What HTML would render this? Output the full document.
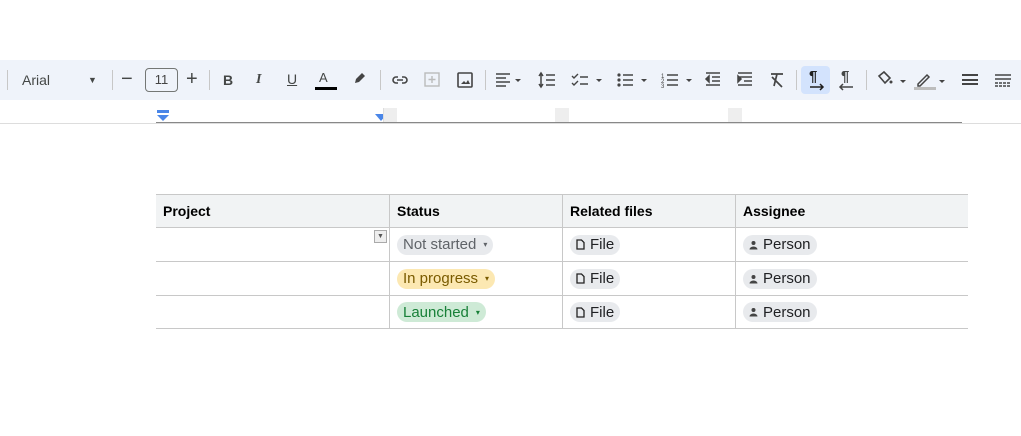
<!DOCTYPE html>
<html><head><style>
body{margin:0;width:1021px;height:436px;background:#fff;font-family:"Liberation Sans",Arial,sans-serif;position:relative;overflow:hidden}
.tb{position:absolute;left:0;top:60px;width:1021px;height:40px;background:#eff3fa}
.a{position:absolute;color:#444746;font-size:14px}
.sep{position:absolute;top:70px;width:1px;height:20px;background:#c7c7c7}
.ic{position:absolute;top:70px}
.tbl{position:absolute;left:156px;top:194px;border-collapse:collapse;font-size:14px}
.tbl td{border:1px solid #c8c8c8;padding:0 7px;height:33px;vertical-align:middle}
.tbl tr:first-child td{background:#f1f3f4;font-weight:bold;height:32px}
.tbl tr:last-child td{height:32px}
.tbl td:first-child{border-left:none}.tbl td:last-child{border-right:none}
.chip{display:inline-flex;align-items:center;height:20px;border-radius:10px;padding:0 6px;font-size:15px;color:#202124;background:#e8eaed;vertical-align:middle}
.ar{font-size:8px;margin-left:7px}
.chip svg{margin-right:5px}
</style></head><body>
<div class="tb"></div>
<div class="sep" style="left:7px"></div>
<div class="a" style="left:22px;top:72px;">Arial</div>
<div class="a" style="left:88px;top:75px;font-size:9px">▼</div>
<div class="sep" style="left:112px"></div>
<div class="a" style="left:121px;top:68px;font-size:20px">−</div>
<div style="position:absolute;left:145px;top:68px;width:31px;height:22px;border:1px solid #747775;border-radius:4px;font-size:13px;text-align:center;line-height:22px;color:#444">11</div>
<div class="a" style="left:186px;top:68px;font-size:20px">+</div>
<div class="sep" style="left:209px"></div>
<div class="a" style="left:223px;top:72px;font-weight:bold">B</div>
<div class="a" style="left:256px;top:72px;font-style:italic;font-weight:bold;font-family:'Liberation Serif'">I</div>
<div class="a" style="left:287px;top:71px;text-decoration:underline">U</div>
<div class="a" style="left:319px;top:70px;font-size:13px">A</div>
<div style="position:absolute;left:315px;top:87px;width:22px;height:3px;background:#000"></div>
<svg class="ic" style="left:351px;top:69px" width="18" height="18"><path d="M4 14l1-4 6-6 3 3-6 6z" fill="#444"/></svg>
<div class="sep" style="left:380px"></div>
<svg class="ic" style="left:390px" width="20" height="20"><path d="M8 7H6a3 3 0 000 6h2M12 7h2a3 3 0 010 6h-2M7 10h6" stroke="#444" stroke-width="1.6" fill="none"/></svg>
<svg class="ic" style="left:422px" width="20" height="20"><rect x="3" y="3" width="14" height="13" fill="none" stroke="#bbb" stroke-width="1.4"/><path d="M10 6v7M6.5 9.5h7" stroke="#bbb" stroke-width="1.4"/></svg>
<svg class="ic" style="left:455px" width="20" height="20"><rect x="3" y="3" width="14" height="14" rx="1" fill="none" stroke="#444" stroke-width="1.6"/><path d="M6 14l3-3 2 2 2-3 2 4z" fill="#444"/></svg>
<div class="sep" style="left:485px"></div>
<svg class="ic" style="left:494px" width="32" height="20"><path d="M2 4h14M2 8h10M2 12h14M2 16h10" stroke="#444" stroke-width="1.6"/><path d="M21 9l3 3 3-3z" fill="#444"/></svg>
<svg class="ic" style="left:537px" width="22" height="20"><path d="M4 4v12M2 6l2-3 2 3M2 14l2 3 2-3M9 5h9M9 10h9M9 15h9" stroke="#444" stroke-width="1.5" fill="none"/></svg>
<svg class="ic" style="left:570px" width="36" height="20"><path d="M2 6l2 2 4-4M2 13l2 2 4-4M10 7h8M10 14h8" stroke="#444" stroke-width="1.4" fill="none"/><path d="M26 9l3 3 3-3z" fill="#444"/></svg>
<svg class="ic" style="left:615px" width="36" height="20"><circle cx="4" cy="5" r="1.6" fill="#444"/><circle cx="4" cy="10" r="1.6" fill="#444"/><circle cx="4" cy="15" r="1.6" fill="#444"/><path d="M8 5h10M8 10h10M8 15h10" stroke="#444" stroke-width="1.6"/><path d="M26 9l3 3 3-3z" fill="#444"/></svg>
<svg class="ic" style="left:660px" width="36" height="20"><text x="1" y="8" font-size="6" fill="#444">1</text><text x="1" y="13" font-size="6" fill="#444">2</text><text x="1" y="18" font-size="6" fill="#444">3</text><path d="M7 5h11M7 10h11M7 15h11" stroke="#444" stroke-width="1.6"/><path d="M26 9l3 3 3-3z" fill="#444"/></svg>
<svg class="ic" style="left:703px" width="20" height="20"><path d="M3 3h14M9 7h8M9 11h8M3 15h14M6 6l-3 3 3 3z" stroke="#444" stroke-width="1.5" fill="#444"/></svg>
<svg class="ic" style="left:735px" width="20" height="20"><path d="M3 3h14M3 7h14M9 11h8M3 15h14M3 6l3 3-3 3z" stroke="#444" stroke-width="1.5" fill="#444"/></svg>
<svg class="ic" style="left:767px" width="20" height="20"><path d="M4 4h12M10 4l-3 12M5 7l10 10" stroke="#444" stroke-width="1.7" fill="none"/></svg>
<div class="sep" style="left:796px"></div>
<div style="position:absolute;left:801px;top:66px;width:29px;height:28px;background:#d3e3fd;border-radius:4px"></div>
<div class="a" style="left:809px;top:68px;font-weight:bold;font-size:15px;color:#1f1f1f">¶</div>
<svg class="ic" style="left:804px;top:82px" width="22" height="10"><path d="M6 5h13M16 2l3 3-3 3" stroke="#1f1f1f" stroke-width="1.5" fill="none"/></svg>
<div class="a" style="left:841px;top:68px;font-weight:bold;font-size:15px">¶</div>
<svg class="ic" style="left:836px;top:82px" width="22" height="10"><path d="M4 5h13M7 2l-3 3 3 3" stroke="#444" stroke-width="1.5" fill="none"/></svg>
<div class="sep" style="left:866px"></div>
<svg class="ic" style="left:875px" width="34" height="20"><path d="M4 6l5-4 6 6-5 5z" fill="none" stroke="#444" stroke-width="1.6"/><circle cx="16" cy="12" r="1.5" fill="#444"/><path d="M25 10l3 3 3-3z" fill="#444"/></svg>
<svg class="ic" style="left:913px" width="34" height="22"><path d="M5 14l9-9 2 2-9 9H5z" fill="none" stroke="#444" stroke-width="1.5"/><rect x="1" y="17" width="22" height="3" fill="#bdbdbd"/><path d="M26 10l3 3 3-3z" fill="#444"/></svg>
<svg class="ic" style="left:960px" width="20" height="20"><path d="M2 5h16M2 10h16M2 14h16" stroke="#444" stroke-width="2"/></svg>
<svg class="ic" style="left:993px" width="20" height="20"><path d="M2 5h16M2 9h16" stroke="#444" stroke-width="1.5"/><path d="M2 13h16M2 16h16" stroke="#444" stroke-width="1.5" stroke-dasharray="3 1"/></svg>
<div style="position:absolute;left:156px;top:122px;width:806px;height:1px;background:#888"></div>
<div style="position:absolute;left:0;top:123px;width:1021px;height:1px;background:#ddd"></div>
<svg style="position:absolute;left:157px;top:110px" width="14" height="12"><rect x="0" y="0" width="12" height="3" fill="#4a86e8"/><path d="M0 5h12l-6 6z" fill="#4a86e8"/></svg>
<svg style="position:absolute;left:375px;top:113px" width="12" height="9"><path d="M0 1h12l-6 7z" fill="#4a86e8"/></svg>
<div style="position:absolute;left:383px;top:108px;width:13px;height:14px;background:#eee;border-left:1px solid #ddd"></div>
<div style="position:absolute;left:555px;top:108px;width:14px;height:14px;background:#eee"></div>
<div style="position:absolute;left:728px;top:108px;width:14px;height:14px;background:#eee"></div>
<table class="tbl">
<tr><td style="width:219px">Project</td><td style="width:158px">Status</td><td style="width:158px">Related files</td><td style="width:218px">Assignee</td></tr>
<tr><td style="position:relative"><span style="position:absolute;right:2px;top:2px;width:11px;height:11px;border:1px solid #aaa;background:#eee;font-size:7px;line-height:11px;text-align:center;color:#555">▼</span></td><td><span class="chip" style="color:#5f6368">Not started<span class="ar">▾</span></span></td><td><span class="chip"><svg width="9" height="11"><path d="M1 1h4.5l2.5 2.5V10H1z" fill="none" stroke="#222" stroke-width="1.3"/></svg>File</span></td><td><span class="chip"><svg width="9" height="10"><circle cx="4.5" cy="3" r="2" fill="#444"/><path d="M0.5 9.5a4 3 0 018 0z" fill="#444"/></svg>Person</span></td></tr>
<tr><td></td><td><span class="chip" style="background:#fce8b2;color:#7a5b00">In progress<span class="ar">▾</span></span></td><td><span class="chip"><svg width="9" height="11"><path d="M1 1h4.5l2.5 2.5V10H1z" fill="none" stroke="#222" stroke-width="1.3"/></svg>File</span></td><td><span class="chip"><svg width="9" height="10"><circle cx="4.5" cy="3" r="2" fill="#444"/><path d="M0.5 9.5a4 3 0 018 0z" fill="#444"/></svg>Person</span></td></tr>
<tr><td></td><td><span class="chip" style="background:#ceead6;color:#188038">Launched<span class="ar">▾</span></span></td><td><span class="chip"><svg width="9" height="11"><path d="M1 1h4.5l2.5 2.5V10H1z" fill="none" stroke="#222" stroke-width="1.3"/></svg>File</span></td><td><span class="chip"><svg width="9" height="10"><circle cx="4.5" cy="3" r="2" fill="#444"/><path d="M0.5 9.5a4 3 0 018 0z" fill="#444"/></svg>Person</span></td></tr>
</table>
</body></html>
